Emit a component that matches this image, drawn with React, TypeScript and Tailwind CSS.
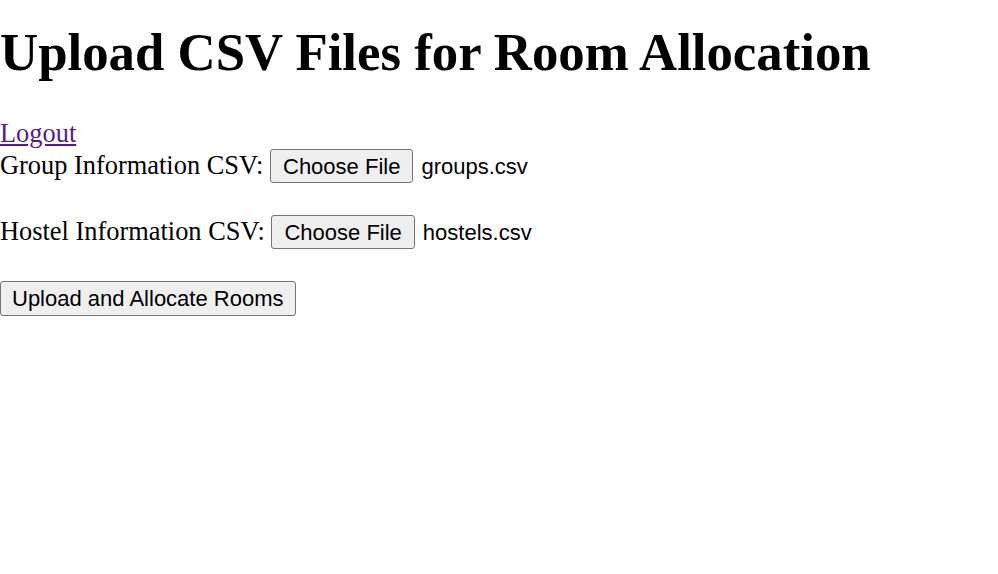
import React from 'react';

const serif = "font-['Liberation_Serif','Times_New_Roman',serif]";
const sans = "font-['Liberation_Sans',Arial,sans-serif]";

function FileField({ label, file }: { label: string; file: string }) {
  return (
    <div className="flex items-center h-[34px]">
      <span className={`${serif} text-[26.4px] text-black whitespace-pre`}>{label} </span>
      <button
        type="button"
        className={`${sans} h-[34px] px-[12px] text-[22px] text-black bg-[#efefef] border border-[#767676] rounded-[3px]`}
      >
        Choose File
      </button>
      <span className={`${sans} ml-[8px] text-[22px] text-black`}>{file}</span>
    </div>
  );
}

export default function App() {
  return (
    <div className="bg-white">
      <h1 className={`${serif} text-[52.8px] font-bold leading-[58px] pt-[23px] pb-[37px] text-black`}>
        Upload CSV Files for Room Allocation
      </h1>
      <div className="h-[30px]">
        <a href="#" className={`${serif} text-[26.4px] leading-[30px] text-[#551a8b] underline`}>
          Logout
        </a>
      </div>
      <form className="flex flex-col items-start gap-[32px] mt-[1px]" onSubmit={(e) => e.preventDefault()}>
        <FileField label="Group Information CSV:" file="groups.csv" />
        <FileField label="Hostel Information CSV:" file="hostels.csv" />
        <button
          type="submit"
          className={`${sans} h-[35px] px-[11px] text-[22px] text-black bg-[#efefef] border border-[#767676] rounded-[3px]`}
        >
          Upload and Allocate Rooms
        </button>
      </form>
    </div>
  );
}
